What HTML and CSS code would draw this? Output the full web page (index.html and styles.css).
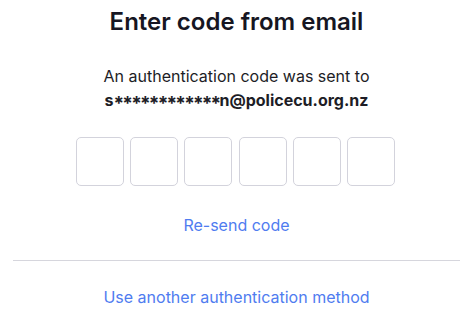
FILE: index.html
```html
<!DOCTYPE html>
<html>
<head>
<meta charset="utf-8">
<link rel="stylesheet" href="styles.css">
</head>
<body>
<div class="page">
  <h1 class="title">Enter code from email</h1>
  <p class="info">An authentication code was sent to<br><strong>s<span class="mask">************</span>n@policecu.org.nz</strong></p>
  <div class="code">
    <input class="digit" type="text" maxlength="1">
    <input class="digit" type="text" maxlength="1">
    <input class="digit" type="text" maxlength="1">
    <input class="digit" type="text" maxlength="1">
    <input class="digit" type="text" maxlength="1">
    <input class="digit" type="text" maxlength="1">
  </div>
  <a class="link resend" href="#">Re-send code</a>
  <hr class="divider">
  <a class="link other" href="#">Use another authentication method</a>
</div>
</body>
</html>
```
FILE: styles.css
```css
html, body {
  margin: 0;
  padding: 0;
  background: #ffffff;
}
body {
  font-family: Inter, "Noto Sans", sans-serif;
  color: #1b1b24;
}
.page {
  width: 473px;
  display: flex;
  flex-direction: column;
  align-items: center;
  padding: 0 13px;
  box-sizing: border-box;
}
.title {
  margin: 7px 0 0;
  font-size: 24px;
  font-weight: 600;
  line-height: 30px;
  color: #161622;
}
.info {
  margin: 27px 0 0;
  font-size: 16px;
  line-height: 24px;
  text-align: center;
  color: #1d1d26;
}
.info strong {
  font-weight: 700;
}
.mask {
  font-size: 19px;
  letter-spacing: -1.8px;
  vertical-align: -4px;
  line-height: 0;
}
.code {
  display: flex;
  gap: 6.2px;
  margin-top: 25px;
  margin-right: 2px;
}
.digit {
  width: 48px;
  height: 49px;
  box-sizing: border-box;
  border: 1px solid #d3d3dc;
  border-radius: 5px;
  padding: 0;
  margin: 0;
  background: #fff;
  outline: none;
}
.link {
  color: #4f7cf0;
  text-decoration: none;
  font-size: 16px;
  line-height: 20px;
}
.resend {
  margin-top: 29px;
}
.divider {
  align-self: stretch;
  border: 0;
  border-top: 1px solid #d6d6dd;
  margin: 25px 0 0;
}
.other {
  margin-top: 26px;
}
```
